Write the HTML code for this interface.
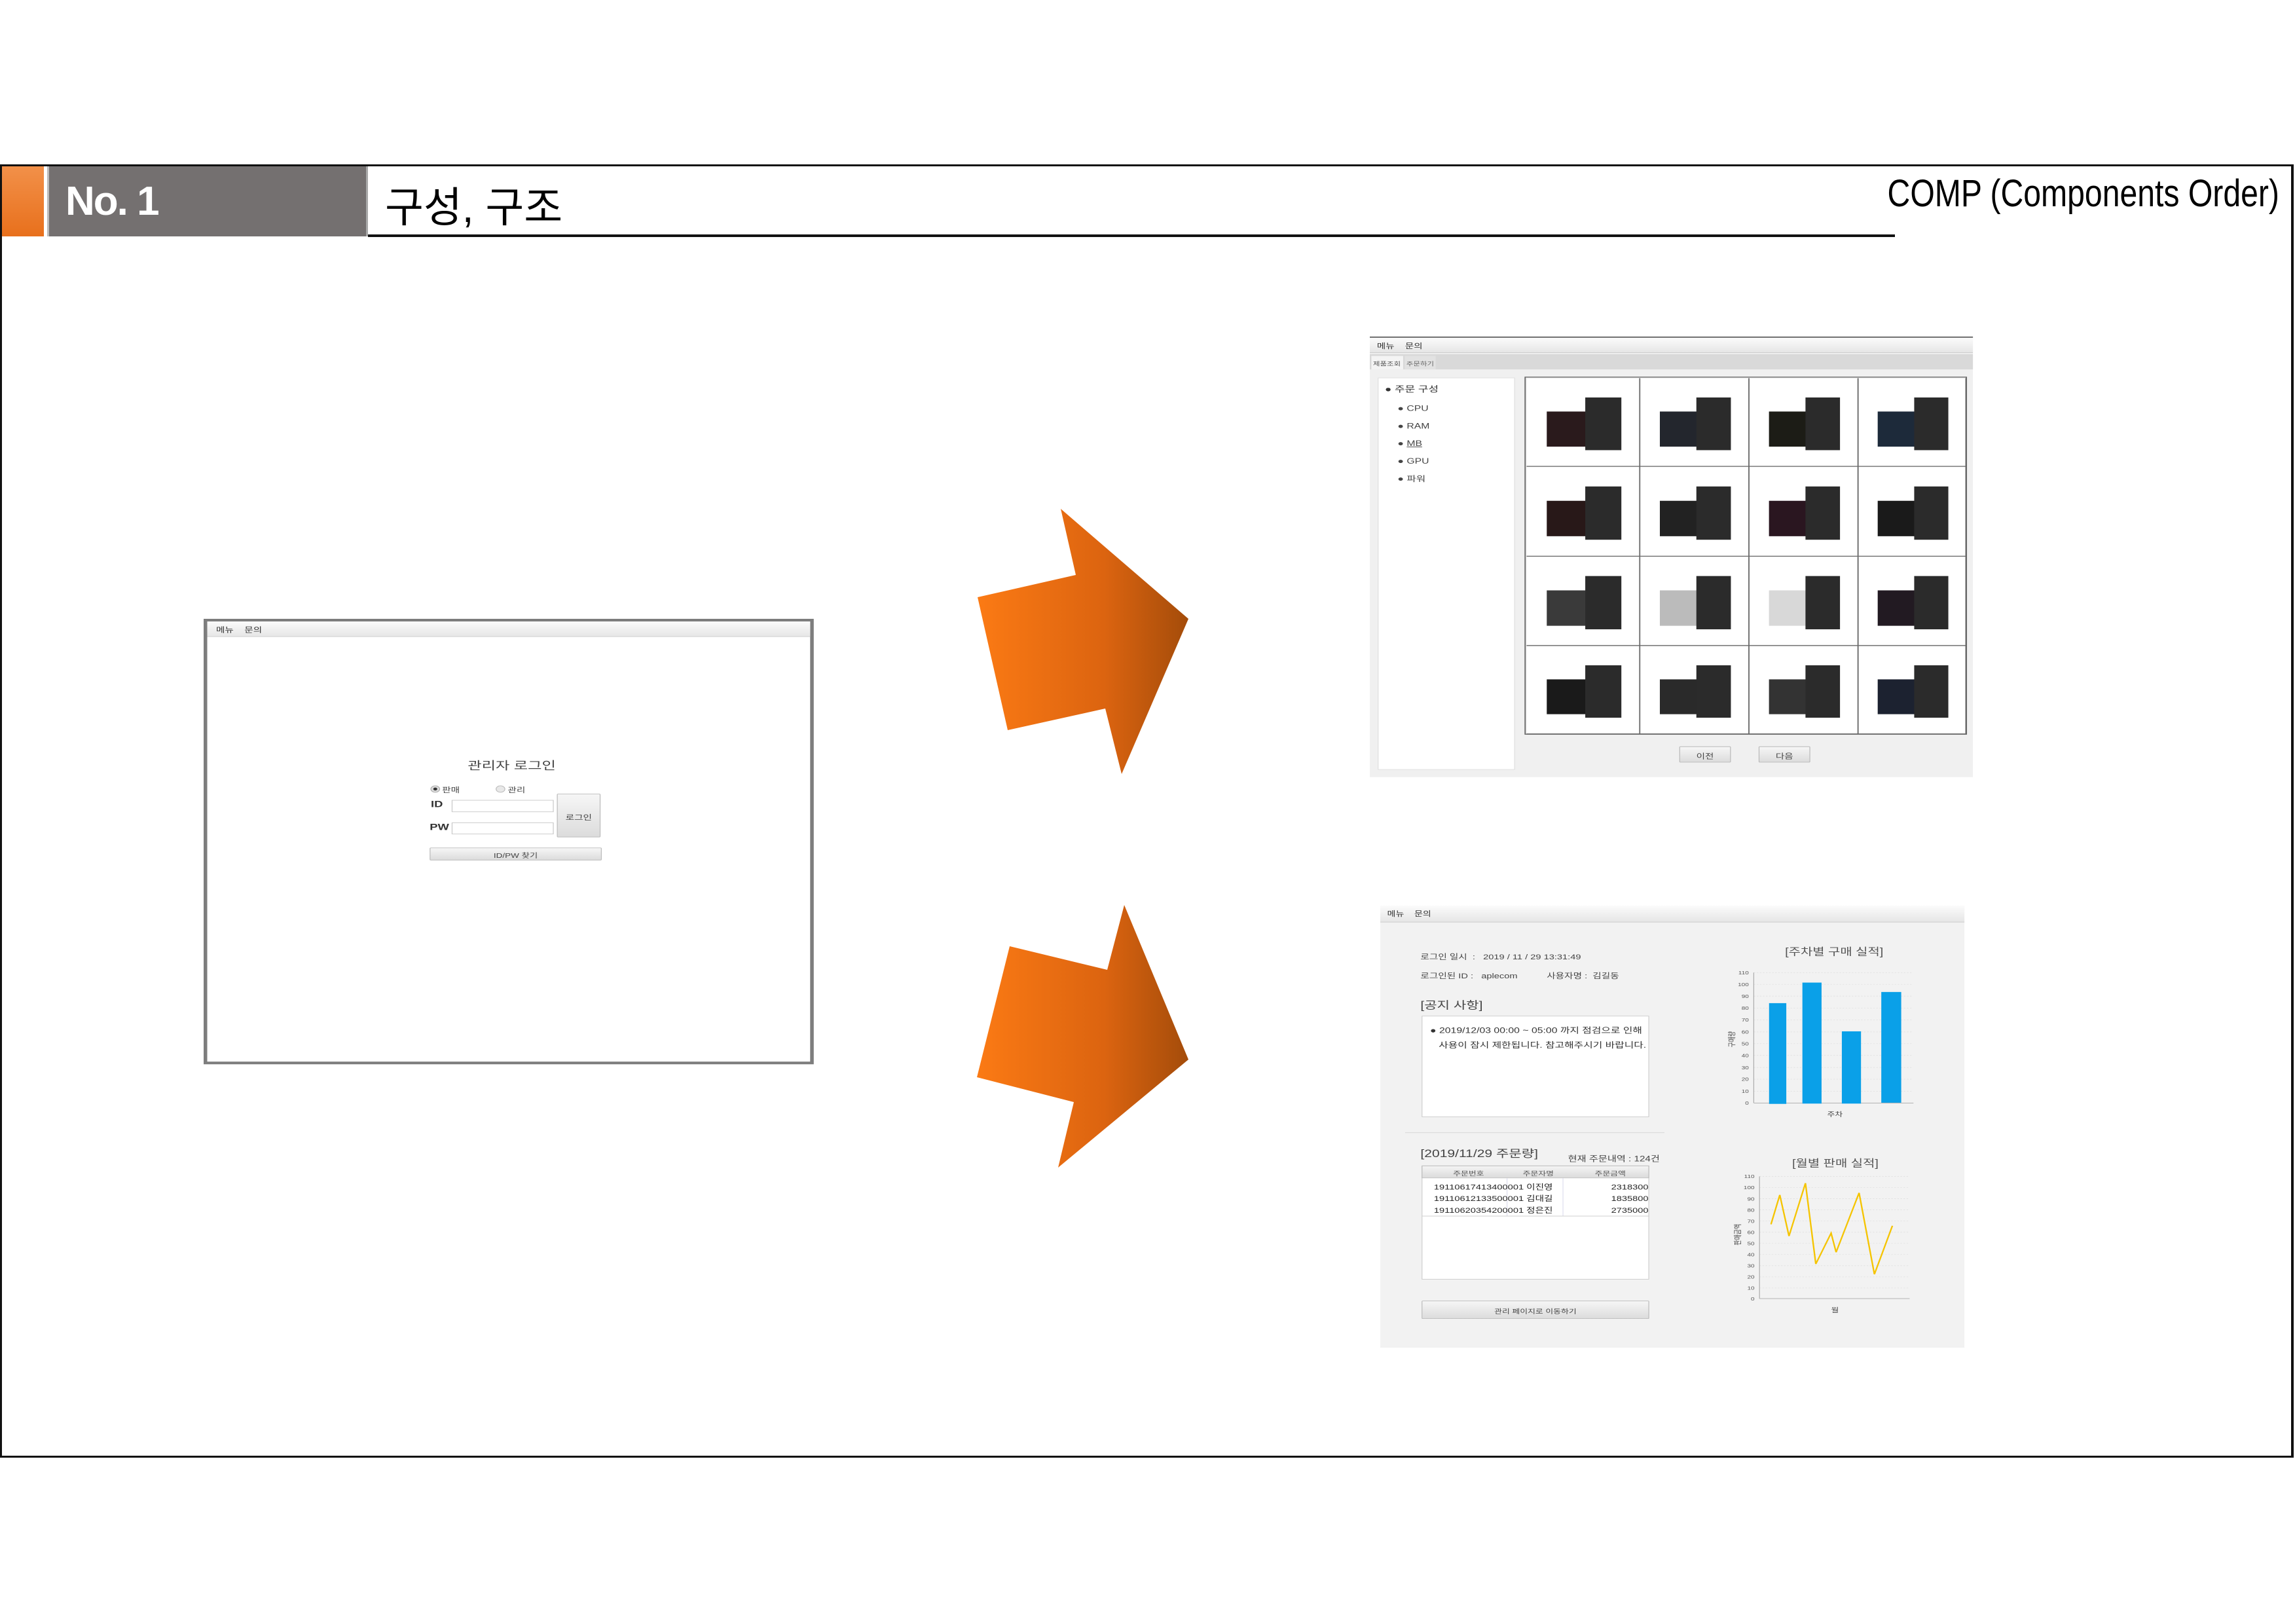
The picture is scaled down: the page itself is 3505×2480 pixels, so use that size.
<!DOCTYPE html>
<html><head><meta charset="utf-8">
<style>
*{margin:0;padding:0;box-sizing:border-box}
body{width:3505px;height:2480px;background:#fff;position:relative;overflow:hidden;font-family:"Liberation Sans","Noto Sans CJK KR",sans-serif;color:#222}
.a{position:absolute}
.sc{position:absolute;transform-origin:0 0;width:1525px;height:1505px}
.mb{background:linear-gradient(#fbfbfb,#e6e6e6);border-bottom:2px solid #c8c8c8}
.btn{background:linear-gradient(#f6f6f6,#dcdcdc);border:2px solid #b9b9b9;border-radius:3px;text-align:center;color:#444}
.cell{position:absolute;background:#fff;border:1px solid #eee}
.bx{position:absolute}
</style></head><body>
<!-- frame -->
<div class="a" style="left:0;top:251px;width:3503px;height:1975px;border:3px solid #111;border-right-width:4px"></div>
<!-- header -->
<div class="a" style="left:3px;top:254px;width:64px;height:107px;background:linear-gradient(#f29049,#e8701c)"></div>
<div class="a" style="left:72px;top:254px;width:490px;height:107px;background:#747070;border-left:3px solid #bdbdbd;border-right:3px solid #a9a9a9"></div>
<div class="a" style="left:100px;top:272px;font-size:62px;font-weight:bold;color:#fff;letter-spacing:-2px">No. 1</div>
<div class="a" style="left:588px;top:266px;font-size:64px;color:#000">구성, 구조</div>
<div class="a" style="left:562px;top:358px;width:2332px;height:4px;background:#111"></div>
<div class="a" style="right:24px;top:262px;font-size:58px;color:#000;white-space:nowrap;transform:scaleX(0.83);transform-origin:right top">COMP (Components Order)</div>

<!-- arrows -->
<svg class="a" style="left:0;top:0" width="3505" height="2480">
<defs><linearGradient id="g" x1="0" x2="1"><stop offset="0" stop-color="#fb7a14"/><stop offset="0.6" stop-color="#dc6410"/><stop offset="1" stop-color="#a44c0a"/></linearGradient></defs>
<polygon fill="url(#g)" points="1620,777 1815,945 1713,1182 1688,1082 1539,1115 1493,912 1643,878"/>
<polygon fill="url(#g)" points="1717,1382 1815,1618 1616,1783 1640,1683 1492,1645 1542,1445 1691,1481"/>
</svg>

<!-- login window -->
<div class="sc" style="left:311px;top:945px;transform:scale(0.611,0.452)">
 <div class="a" style="left:0;top:0;width:1525px;height:1505px;border:9px solid #7d7d7d;background:#fff"></div>
 <div class="a mb" style="left:9px;top:9px;width:1507px;height:52px;font-size:24px;padding:8px 22px;color:#333">메뉴 &nbsp;&nbsp; 문의</div>
 <div class="a" style="left:660px;top:465px;font-size:38px;color:#444">관리자 로그인</div>
 <div class="a" style="left:567px;top:563px;width:24px;height:24px;border-radius:50%;border:2px solid #aaa;background:radial-gradient(#333 30%,#ddd 40%)"></div>
 <div class="a" style="left:596px;top:558px;font-size:24px;color:#444">판매</div>
 <div class="a" style="left:730px;top:563px;width:24px;height:24px;border-radius:50%;border:2px solid #bbb;background:#e8e8e8"></div>
 <div class="a" style="left:760px;top:558px;font-size:24px;color:#444">관리</div>
 <div class="a" style="left:568px;top:610px;font-size:30px;font-weight:bold;color:#333">ID</div>
 <div class="a" style="left:620px;top:612px;width:255px;height:41px;border:2px solid #c8c8c8;background:#fff"></div>
 <div class="a" style="left:565px;top:688px;font-size:30px;font-weight:bold;color:#333">PW</div>
 <div class="a" style="left:620px;top:688px;width:255px;height:40px;border:2px solid #c8c8c8;background:#fff"></div>
 <div class="a btn" style="left:883px;top:591px;width:109px;height:147px;font-size:24px;padding-top:58px">로그인</div>
 <div class="a btn" style="left:565px;top:773px;width:430px;height:43px;font-size:22px;padding-top:8px">ID/PW 찾기</div>
</div>

<!-- top app screenshot -->
<div class="sc" style="left:2092px;top:514px;width:1520px;transform:scale(0.606,0.447)">
 <div class="a" style="left:0;top:0;width:1520px;height:1505px;background:#f0f0f0;border-top:4px solid #555"></div>
 <div class="a mb" style="left:0;top:4px;width:1520px;height:52px;font-size:24px;padding:8px 18px;color:#333">메뉴 &nbsp;&nbsp; 문의</div>
 <div class="a" style="left:0;top:60px;width:1520px;height:52px;background:#d9d9d9"></div>
 <div class="a" style="left:4px;top:66px;width:80px;height:46px;background:#f4f4f4;font-size:19px;padding:12px 4px;color:#555;white-space:nowrap;overflow:hidden">제품조회</div>
 <div class="a" style="left:88px;top:66px;width:78px;height:46px;background:#e2e2e2;font-size:19px;padding:12px 4px;color:#666;white-space:nowrap;overflow:hidden">주문하기</div>
 <div class="a" style="left:20px;top:140px;width:346px;height:1340px;background:#fff;border:2px solid #ddd"></div>
 <div class="a" style="left:38px;top:150px;font-size:28px;color:#333;line-height:60px">● 주문 구성</div>
 <div class="a" style="left:70px;top:215px;font-size:26px;color:#444;line-height:60px">● CPU<br>● RAM<br>● <u>MB</u><br>● GPU<br>● 파워</div>
 <div class="a" style="left:390px;top:137px;width:1115px;height:1223px;background:#eee;border:3px solid #666"></div>
 <div id="grid"></div>
 <div class="a btn" style="left:780px;top:1400px;width:130px;height:55px;font-size:24px;padding-top:12px">이전</div>
 <div class="a btn" style="left:980px;top:1400px;width:130px;height:55px;font-size:24px;padding-top:12px">다음</div>
</div>

<!-- bottom app screenshot -->
<div class="sc" style="left:2108px;top:1383px;transform:scale(0.585,0.4485)">
 <div class="a" style="left:0;top:0;width:1525px;height:1505px;background:#f2f2f2"></div>
 <div class="a mb" style="left:0;top:0;width:1525px;height:57px;font-size:24px;padding:8px 18px;color:#333">메뉴 &nbsp;&nbsp; 문의</div>
 <div class="a" style="left:105px;top:155px;font-size:25px;color:#444">로그인 일시 &nbsp;: &nbsp; 2019 / 11 / 29 13:31:49</div>
 <div class="a" style="left:105px;top:220px;font-size:25px;color:#444">로그인된 ID : &nbsp; aplecom &nbsp;&nbsp;&nbsp;&nbsp;&nbsp;&nbsp;&nbsp;&nbsp;&nbsp;&nbsp;사용자명 : &nbsp;김길동</div>
 <div class="a" style="left:105px;top:310px;font-size:36px;color:#444">[공지 사항]</div>
 <div class="a" style="left:108px;top:375px;width:594px;height:345px;background:#fff;border:2px solid #ccc"></div>
 <div class="a" style="left:130px;top:400px;font-size:27px;color:#333;line-height:50px">● 2019/12/03 00:00 ~ 05:00 까지 점검으로 인해<br>&nbsp;&nbsp; 사용이 잠시 제한됩니다. 참고해주시기 바랍니다.</div>
 <div class="a" style="left:65px;top:772px;width:677px;height:2px;background:#d4d4d4"></div>
 <div class="a" style="left:105px;top:815px;font-size:36px;color:#444">[2019/11/29 주문량]</div>
 <div class="a" style="left:490px;top:842px;font-size:26px;color:#444">현재 주문내역 : 124건</div>
 <div class="a" style="left:108px;top:885px;width:594px;height:388px;background:#fff;border:2px solid #ccc"></div>
 <div class="a" style="left:108px;top:885px;width:594px;height:43px;background:linear-gradient(#f4f4f4,#dcdcdc);border:2px solid #bbb;font-size:22px;color:#555">
  <span class="a" style="left:80px;top:8px">주문번호</span><span class="a" style="left:262px;top:8px">주문자명</span><span class="a" style="left:450px;top:8px">주문금액</span></div>
 <div class="a" style="left:330px;top:928px;width:2px;height:130px;background:#dde"></div>
 <div class="a" style="left:476px;top:928px;width:2px;height:130px;background:#dde"></div>
 <div class="a" style="left:140px;top:938px;font-size:25px;color:#222;line-height:40px">19110617413400001 이진영<br>19110612133500001 김대길<br>19110620354200001 정은진</div>
 <div class="a" style="left:580px;top:938px;font-size:25px;color:#222;line-height:40px;text-align:right;width:120px">2318300<br>1835800<br>2735000</div>
 <div class="a" style="left:110px;top:1056px;width:590px;height:2px;background:#ccc"></div>
 <div class="a btn" style="left:108px;top:1345px;width:594px;height:62px;font-size:22px;padding-top:17px">관리 페이지로 이동하기</div>
 <svg class="a" style="left:0;top:0" width="1525" height="1505" font-family="Liberation Sans,Noto Sans CJK KR,sans-serif">
  <text x="1185" y="168" font-size="34" fill="#555" text-anchor="middle">[주차별 구매 실적]</text>
  <g stroke="#ddd" stroke-dasharray="4 4" stroke-width="1.5">
   <line x1="975" x2="1390" y1="228" y2="228"/><line x1="975" x2="1390" y1="268" y2="268"/><line x1="975" x2="1390" y1="308" y2="308"/><line x1="975" x2="1390" y1="349" y2="349"/><line x1="975" x2="1390" y1="389" y2="389"/><line x1="975" x2="1390" y1="430" y2="430"/><line x1="975" x2="1390" y1="470" y2="470"/><line x1="975" x2="1390" y1="510" y2="510"/><line x1="975" x2="1390" y1="551" y2="551"/><line x1="975" x2="1390" y1="591" y2="591"/><line x1="975" x2="1390" y1="632" y2="632"/>
  </g>
  <line x1="975" y1="228" x2="975" y2="672" stroke="#aaa" stroke-width="2"/>
  <line x1="975" y1="672" x2="1392" y2="672" stroke="#aaa" stroke-width="2"/>
  <g fill="#0aa0e8"><rect x="1015" y="332" width="45" height="343"/><rect x="1102" y="262" width="50" height="412"/><rect x="1205" y="428" width="50" height="246"/><rect x="1308" y="294" width="52" height="377"/></g>
  <g font-size="17" fill="#555" text-anchor="end"><text x="962" y="234">110</text><text x="962" y="274">100</text><text x="962" y="314">90</text><text x="962" y="355">80</text><text x="962" y="395">70</text><text x="962" y="436">60</text><text x="962" y="476">50</text><text x="962" y="516">40</text><text x="962" y="557">30</text><text x="962" y="597">20</text><text x="962" y="638">10</text><text x="962" y="678">0</text></g>
  <text x="1187" y="718" font-size="22" fill="#444" text-anchor="middle">주차</text>
  <text x="925" y="455" font-size="20" fill="#444" transform="rotate(-90 925 455)" text-anchor="middle">구매량</text>
  <text x="1188" y="888" font-size="34" fill="#555" text-anchor="middle">[월별 판매 실적]</text>
  <g stroke="#ddd" stroke-dasharray="4 4" stroke-width="1.5">
   <line x1="990" x2="1380" y1="922" y2="922"/><line x1="990" x2="1380" y1="960" y2="960"/><line x1="990" x2="1380" y1="998" y2="998"/><line x1="990" x2="1380" y1="1036" y2="1036"/><line x1="990" x2="1380" y1="1074" y2="1074"/><line x1="990" x2="1380" y1="1112" y2="1112"/><line x1="990" x2="1380" y1="1150" y2="1150"/><line x1="990" x2="1380" y1="1188" y2="1188"/><line x1="990" x2="1380" y1="1226" y2="1226"/><line x1="990" x2="1380" y1="1264" y2="1264"/><line x1="990" x2="1380" y1="1302" y2="1302"/>
  </g>
  <line x1="990" y1="922" x2="990" y2="1338" stroke="#aaa" stroke-width="2"/>
  <line x1="990" y1="1338" x2="1382" y2="1338" stroke="#aaa" stroke-width="2"/>
  <polyline fill="none" stroke="#f5c400" stroke-width="4" points="1020,1085 1043,985 1067,1125 1110,945 1137,1220 1177,1115 1190,1180 1250,978 1290,1255 1337,1090"/>
  <g font-size="17" fill="#555" text-anchor="end"><text x="977" y="928">110</text><text x="977" y="966">100</text><text x="977" y="1004">90</text><text x="977" y="1042">80</text><text x="977" y="1080">70</text><text x="977" y="1118">60</text><text x="977" y="1156">50</text><text x="977" y="1194">40</text><text x="977" y="1232">30</text><text x="977" y="1270">20</text><text x="977" y="1308">10</text><text x="977" y="1344">0</text></g>
  <text x="1187" y="1385" font-size="22" fill="#444" text-anchor="middle">월</text>
  <text x="940" y="1120" font-size="20" fill="#444" transform="rotate(-90 940 1120)" text-anchor="middle">판매금액</text>
 </svg>
</div>

<script>
(function(){
 var g=document.getElementById('grid'),xs=[393,680,955,1230,1502],ys=[140,443,750,1055,1357],h='';
 var cols=['#2a1a1c','#23262d','#1c1c16','#1d2a3a','#281818','#222','#2a1620','#1a1a1a','#3a3a3a','#bbb','#d8d8d8','#221a22','#1a1a1a','#2a2a2a','#333','#1c2230'];
 var k=0;
 for(var r=0;r<4;r++)for(var c=0;c<4;c++){
  var x=xs[c]+2,y=ys[r]+2,w=xs[c+1]-xs[c]-3,hh=ys[r+1]-ys[r]-3;
  h+='<div class="cell" style="left:'+x+'px;top:'+y+'px;width:'+w+'px;height:'+hh+'px"></div>';
  var col=cols[k++];
  h+='<div class="bx" style="left:'+(x+w*0.18)+'px;top:'+(y+hh*0.38)+'px;width:'+(w*0.35)+'px;height:'+(hh*0.4)+'px;background:'+col+'"></div>';
  h+='<div class="bx" style="left:'+(x+w*0.52)+'px;top:'+(y+hh*0.22)+'px;width:'+(w*0.32)+'px;height:'+(hh*0.6)+'px;background:#2b2b2b"></div>';
  h+='<div class="a" style="left:'+x+'px;top:'+y+'px;width:'+(w+3)+'px;height:'+(hh+3)+'px;border-right:3px solid #666;border-bottom:3px solid #666"></div>';
 }
 g.innerHTML=h;
})();
</script>
</body></html>
